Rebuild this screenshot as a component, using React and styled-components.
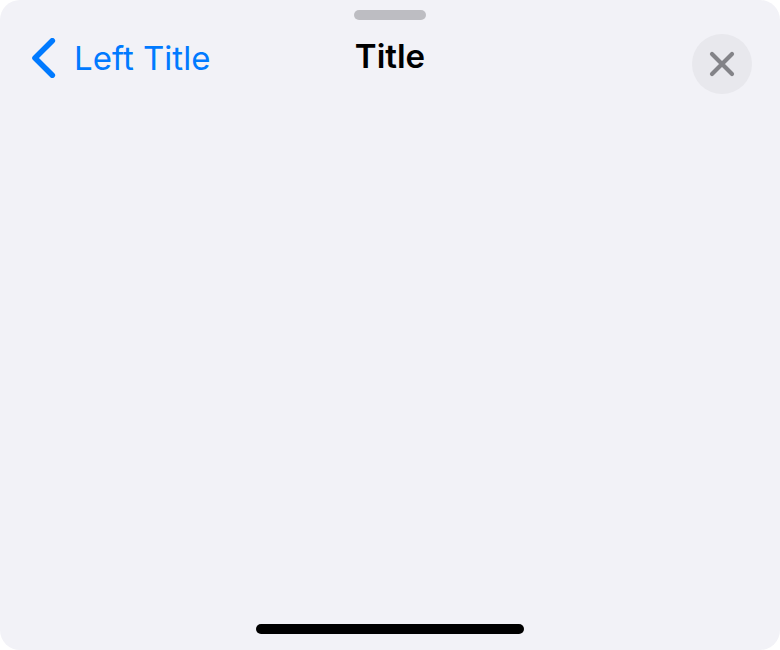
import React from "react";
import styled, { createGlobalStyle } from "styled-components";

const GlobalStyle = createGlobalStyle`
  * { box-sizing: border-box; }
  body {
    margin: 0;
    background: #ffffff;
    font-family: Inter, "Liberation Sans", sans-serif;
  }
`;

const Sheet = styled.main`
  display: flex;
  flex-direction: column;
  align-items: center;
  min-height: 100vh;
  padding: 10px 0 16px;
  border-radius: 20px;
  background: #f2f2f7;
`;

const Bar = styled.div`
  width: ${(p) => p.$width};
  height: 10px;
  border-radius: 5px;
  background: ${(p) => p.$color};
`;

const NavBar = styled.header`
  display: grid;
  grid-template-columns: 1fr auto 1fr;
  align-items: start;
  width: 100%;
  padding: 14px 28px 0;
`;

const BackButton = styled.button`
  display: flex;
  align-items: center;
  justify-self: start;
  gap: 18px;
  height: 48px;
  padding: 0 4px;
  border: 0;
  background: none;
  color: #007aff;
  font-family: inherit;
  font-size: 33px;
  line-height: 44px;
  white-space: nowrap;
  cursor: pointer;
`;

const Title = styled.h1`
  margin: 0;
  font-size: 33px;
  font-weight: 600;
  line-height: 44px;
  color: #000000;
`;

const CloseButton = styled.button`
  display: grid;
  place-items: center;
  justify-self: end;
  width: 60px;
  height: 60px;
  padding: 0;
  border: 0;
  border-radius: 50%;
  background: #e8e8ed;
  color: #838388;
  cursor: pointer;
`;

const Content = styled.section`
  flex: 1;
  width: 100%;
`;

function ChevronIcon() {
  return (
    <svg width="24" height="40" viewBox="0 0 24 40" fill="none" aria-hidden="true">
      <path d="M20.3 2.8L3 20L20.3 37.2" stroke="currentColor" strokeWidth="5.6" strokeLinecap="round" strokeLinejoin="round" />
    </svg>
  );
}

function CloseIcon() {
  return (
    <svg width="26" height="26" viewBox="0 0 26 26" fill="none" aria-hidden="true">
      <path d="M3 3L23 23M23 3L3 23" stroke="currentColor" strokeWidth="4.2" strokeLinecap="round" />
    </svg>
  );
}

export default function App() {
  return (
    <>
      <GlobalStyle />
      <Sheet>
        <Bar $width="72px" $color="#bdbdc2" />
        <NavBar>
          <BackButton type="button">
            <ChevronIcon />
            <span>Left Title</span>
          </BackButton>
          <Title>Title</Title>
          <CloseButton type="button" aria-label="Close">
            <CloseIcon />
          </CloseButton>
        </NavBar>
        <Content />
        <Bar $width="268px" $color="#000000" />
      </Sheet>
    </>
  );
}
